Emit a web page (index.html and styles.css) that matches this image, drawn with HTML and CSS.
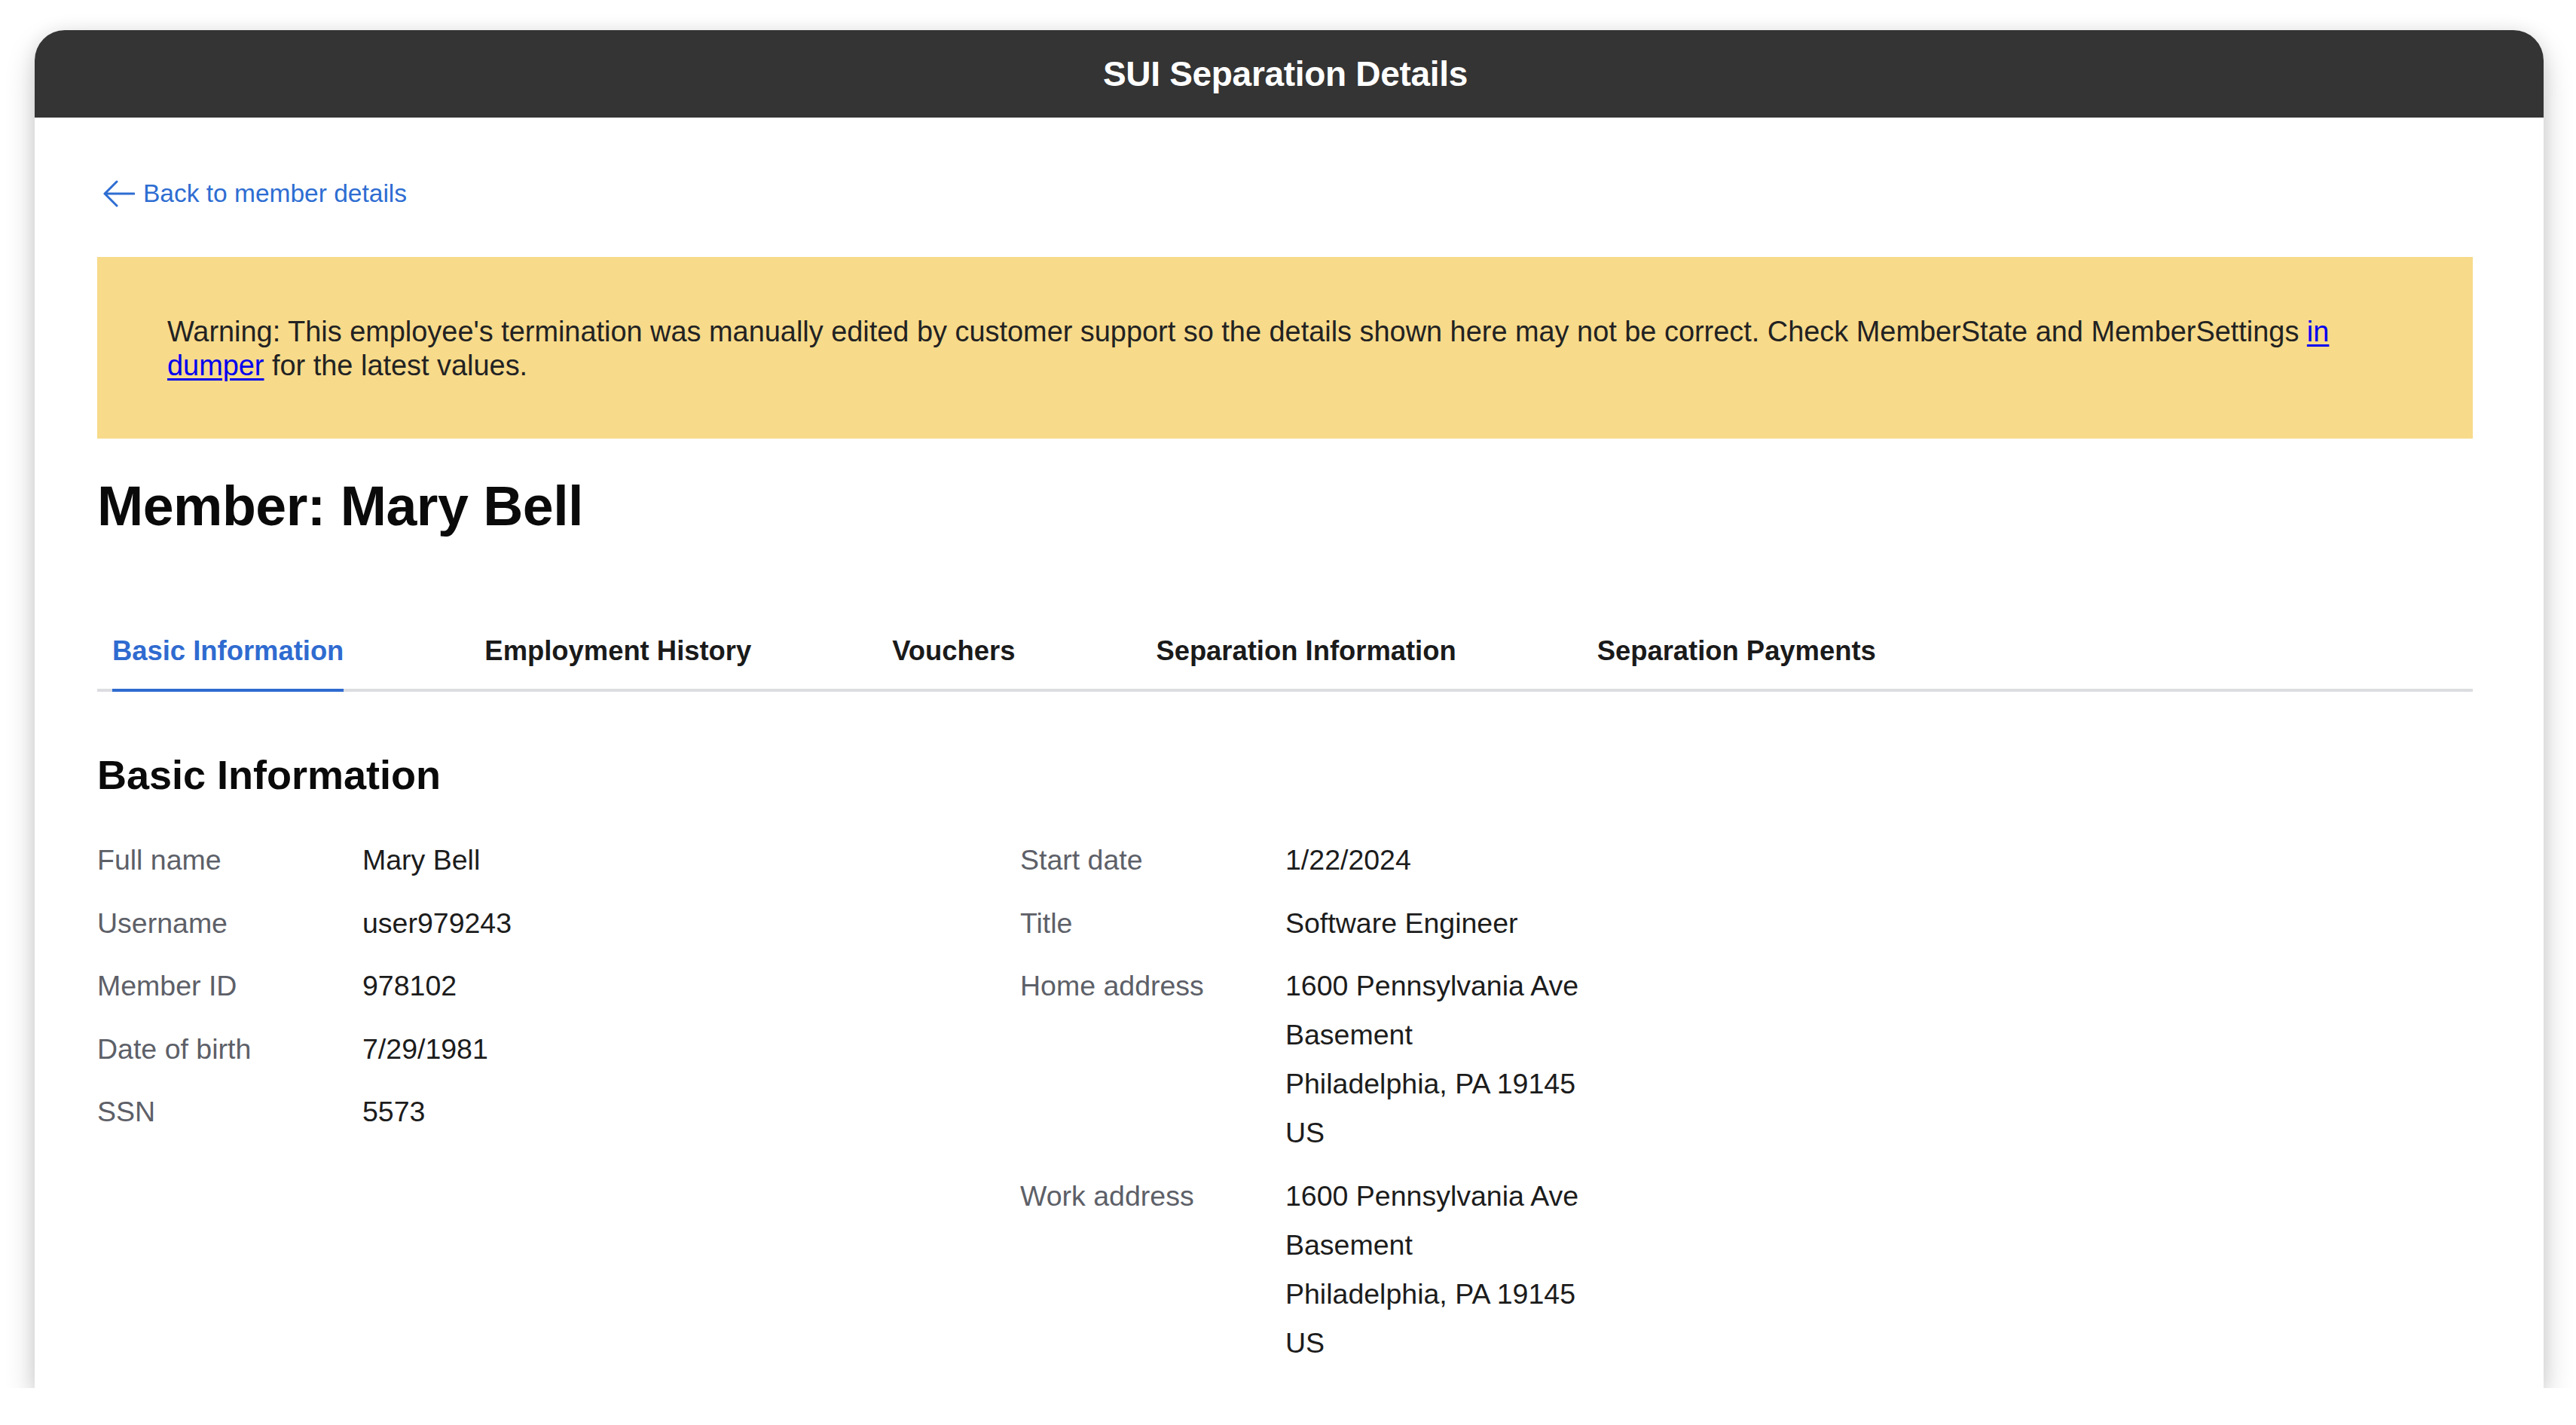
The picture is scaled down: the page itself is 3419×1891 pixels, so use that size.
FILE: index.html
```html
<!DOCTYPE html>
<html lang="en">
<head>
<meta charset="utf-8">
<title>SUI Separation Details</title>
<link rel="stylesheet" href="styles.css">
</head>
<body>
<div class="window">
  <header class="titlebar">SUI Separation Details</header>
  <main class="content">
    <a class="back-link" href="#">
      <svg class="back-icon" width="42" height="36" viewBox="0 0 42 36" aria-hidden="true">
        <path d="M18 2 L2 18 L18 34 M2 18 H41" fill="none" stroke="currentColor" stroke-width="3" stroke-linecap="round" stroke-linejoin="round"/>
      </svg>
      <span>Back to member details</span>
    </a>

    <div class="warning">
      Warning: This employee's termination was manually edited by customer support so the details shown here may not be correct. Check MemberState and MemberSettings <a class="inline-link" href="#">in</a> <a class="inline-link" href="#">dumper</a> for the latest values.
    </div>

    <h1 class="member-title">Member: Mary Bell</h1>

    <nav class="tabs">
      <span class="tab tab-active">Basic Information</span>
      <span class="tab">Employment History</span>
      <span class="tab">Vouchers</span>
      <span class="tab">Separation Information</span>
      <span class="tab">Separation Payments</span>
    </nav>

    <h2 class="section-title">Basic Information</h2>

    <div class="info-columns">
      <dl class="info-list">
        <div class="info-row"><dt>Full name</dt><dd>Mary Bell</dd></div>
        <div class="info-row"><dt>Username</dt><dd>user979243</dd></div>
        <div class="info-row"><dt>Member ID</dt><dd>978102</dd></div>
        <div class="info-row"><dt>Date of birth</dt><dd>7/29/1981</dd></div>
        <div class="info-row"><dt>SSN</dt><dd>5573</dd></div>
      </dl>
      <dl class="info-list">
        <div class="info-row"><dt>Start date</dt><dd>1/22/2024</dd></div>
        <div class="info-row"><dt>Title</dt><dd>Software Engineer</dd></div>
        <div class="info-row"><dt>Home address</dt><dd><span class="line">1600 Pennsylvania Ave</span><span class="line">Basement</span><span class="line">Philadelphia, PA 19145</span><span class="line">US</span></dd></div>
        <div class="info-row"><dt>Work address</dt><dd><span class="line">1600 Pennsylvania Ave</span><span class="line">Basement</span><span class="line">Philadelphia, PA 19145</span><span class="line">US</span></dd></div>
      </dl>
    </div>
  </main>
</div>
</body>
</html>
```

FILE: styles.css
```css
html, body {
  margin: 0;
  padding: 0;
  background: #ffffff;
}

body {
  font-family: "Liberation Sans", Arial, sans-serif;
  color: #1f1f1f;
  padding: 40px 0 0 46px;
}

.window {
  width: 3330px;
  height: 1802px;
  background: #ffffff;
  border-radius: 40px 40px 0 0;
  box-shadow: 0 18px 40px rgba(0, 0, 0, 0.2), 0 0 22px rgba(0, 0, 0, 0.07);
  overflow: hidden;
  display: flex;
  flex-direction: column;
}

.titlebar {
  height: 116px;
  flex: none;
  background: #343434;
  color: #ffffff;
  font-weight: 700;
  font-size: 46px;
  display: flex;
  align-items: center;
  justify-content: center;
  padding-right: 10px;
  letter-spacing: -0.3px;
}

.content {
  padding: 83px 94px 0 83px;
}

.back-link {
  display: flex;
  align-items: center;
  height: 36px;
  color: #2e6dd2;
  text-decoration: none;
  font-size: 33.5px;
  line-height: 36px;
}

.back-icon {
  margin-left: 8px;
  margin-right: 11px;
  flex: none;
}

.warning {
  margin-top: 66px;
  background: #f7da8a;
  padding: 77px 93px 74px 93px;
  font-size: 37.9px;
  line-height: 45px;
  color: #222222;
}

.inline-link {
  color: #0000ee;
  text-decoration: underline;
  text-underline-offset: 4px;
  text-decoration-thickness: 3px;
}

.member-title {
  margin: 47px 0 0 0;
  font-size: 73.5px;
  line-height: 86px;
  font-weight: 700;
  color: #0a0a0a;
  letter-spacing: -0.5px;
}

.tabs {
  margin-top: 127px;
  display: flex;
  gap: 187px;
  padding-left: 20px;
  border-bottom: 4px solid #dcdde1;
}

.tab {
  font-size: 36.4px;
  line-height: 44px;
  font-weight: 700;
  color: #1a1a1a;
  padding-bottom: 28px;
  margin-bottom: -4px;
  border-bottom: 4px solid transparent;
}

.tab-active {
  color: #2f6bd0;
  border-bottom-color: #2f6bd0;
}

.section-title {
  margin: 79px 0 0 0;
  font-size: 54px;
  line-height: 63px;
  font-weight: 700;
  color: #0a0a0a;
}

.info-columns {
  margin-top: 49px;
  display: grid;
  grid-template-columns: 1225px 1fr;
}

.info-list {
  margin: 0;
  display: flex;
  flex-direction: column;
  gap: 18.5px;
}

.info-row {
  display: grid;
  grid-template-columns: 352px 1fr;
  font-size: 37.5px;
  line-height: 65px;
}

.info-row dt {
  color: #5d6068;
}

.info-row dd {
  margin: 0;
  color: #1c1c1c;
  display: flex;
  flex-direction: column;
}

.line {
  display: block;
}
```
